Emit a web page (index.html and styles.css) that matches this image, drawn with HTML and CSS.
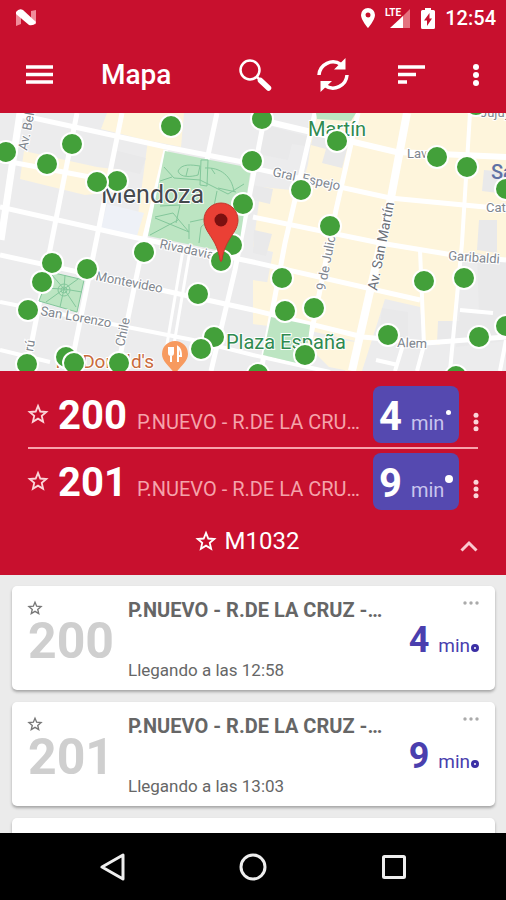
FILE: index.html
```html
<!DOCTYPE html>
<html lang="es">
<head>
    <meta charset="UTF-8">
    <meta name="viewport" content="width=device-width, initial-scale=1.0">
    <title>Mapa</title>
    <link rel="stylesheet" href="styles.css">
</head>
<body>
    <!-- shared icons -->
    <svg class="sprite" aria-hidden="true">
        <symbol id="star" viewBox="0 0 24 24">
            <path d="M12 3.2l2.5 6.1 6.6.5-5 4.3 1.5 6.4-5.6-3.4-5.6 3.4 1.5-6.4-5-4.3 6.6-.5z" fill="none" stroke="currentColor" stroke-width="2"/>
        </symbol>
        <symbol id="more" viewBox="0 0 8 24">
            <circle cx="4" cy="4" r="3"/>
            <circle cx="4" cy="12" r="3"/>
            <circle cx="4" cy="20" r="3"/>
        </symbol>
        <symbol id="dots" viewBox="0 0 16 4">
            <circle cx="2" cy="2" r="1.7"/>
            <circle cx="8" cy="2" r="1.7"/>
            <circle cx="14" cy="2" r="1.7"/>
        </symbol>
    </svg>

    <div class="status-bar">
        <svg class="status-n" width="22" height="18" viewBox="0 0 22 18">
            <path d="M1 3l5-2v14l-5 2zM16 2l5-1v14l-5 1z" fill="#f08c9b"/>
            <path d="M1 3Q4-1 8 1l13 12q-2 4-7 3L1 5z" fill="#fff"/>
        </svg>
        <div class="status-icons">
            <svg width="14" height="20" viewBox="0 0 14 20">
                <path fill-rule="evenodd" d="M7 0a7 7 0 0 0-7 7c0 5 7 13 7 13s7-8 7-13a7 7 0 0 0-7-7zm0 4.500a2.500 2.500 0 1 1 0 5 2.500 2.500 0 0 1 0-5z" fill="#fff"/>
            </svg>
            <svg width="26" height="22" viewBox="0 0 26 22">
                <path d="M25 2v19h-9v-10z" fill="#e4727f"/>
                <path d="M5 21L18 9v12z" fill="#fff"/>
                <text x="0" y="9" class="lte">LTE</text>
            </svg>
            <svg width="14" height="21" viewBox="0 0 14 21">
                <path fill-rule="evenodd" d="M4 0h6v2h2.500q1.500 0 1.500 1.500v16q0 1.500-1.500 1.500h-11Q0 21 0 19.500v-16Q0 2 1.500 2H4zM8.500 5L3 12.500h3V18l5-7.500H8.500z" fill="#fff"/>
            </svg>
            <span class="clock">12:54</span>
        </div>
    </div>

    <header class="app-bar">
        <button class="icon-btn" aria-label="Menú">
            <svg width="27" height="20" viewBox="0 0 27 20"><path d="M0 2h27M0 9.500h27M0 17h27" stroke="#fff" stroke-width="3.500"/></svg>
        </button>
        <h1 class="title">Mapa</h1>
        <div class="actions">
            <button class="icon-btn action" aria-label="Buscar">
                <svg width="34" height="34" viewBox="0 0 34 34">
                    <circle cx="12" cy="12" r="9.500" fill="none" stroke="#fff" stroke-width="2.500"/>
                    <path d="M18.500 18.500l4 4" stroke="#fff" stroke-width="2.500"/>
                    <path d="M22.500 22.500l8 7.500" stroke="#fff" stroke-width="5.500" stroke-linecap="round"/>
                </svg>
            </button>
            <button class="icon-btn action" aria-label="Actualizar">
                <svg width="34" height="34" viewBox="0 0 34 34">
                    <path d="M3 17A14 14 0 0 1 25 6.500M31 17A14 14 0 0 1 9 27.500" fill="none" stroke="#fff" stroke-width="3.500"/>
                    <path d="M29.500 0v11.500H18zM4.500 34V23H16z" fill="#fff"/>
                </svg>
            </button>
            <button class="icon-btn action" aria-label="Ordenar">
                <svg width="27" height="20" viewBox="0 0 27 20"><path d="M0 2h27M0 9.500h18M0 17h9" stroke="#fff" stroke-width="3.500"/></svg>
            </button>
            <button class="icon-btn" aria-label="Más opciones">
                <svg class="icon-more" width="8" height="24"><use href="#more"/></svg>
            </button>
        </div>
    </header>

    <main class="content">
        <svg class="map" viewBox="0 113 506 258" preserveAspectRatio="xMidYMid slice" role="img" aria-label="Mapa de paradas">
            <rect y="113" width="506" height="258" fill="#ececed"/>

            <!-- commercial blocks -->
            <g fill="#fef5dc">
                <path d="M107 113h77l-3 34-40-8-40-10z"/>
                <path d="M24 151l73 16 24 3-6 22-30 3-65-16z"/>
                <path d="M148 140l17 5-22 95-8-2z"/>
                <path d="M315 113h191v145l-46-3-4 75-17 15-15-3-4-35-35-8-23 72H345l10-30-40-9-55-12 13-68-20-5 8-60 40 4 7-27z"/>
                <path d="M253 280l26 4-10 42-16-2zM296 334l60 8-7 29-20-4z"/>
            </g>
            <g fill="#e9e9ea">
                <path d="M315 128l36 6-9 34-20-5 4-14-15-4z"/>
                <path d="M265 125l45 12-5 9-13-2-4 16-30-6z"/>
                <path d="M253 185l20 4-3 15-17-4zM254 230l18 4-6 22-13-3z"/>
                <path d="M484 170l22 2v22l-24-3zM479 220h18v33l-20-3z"/>
                <path d="M382 308l26 4v28l-29-5zM438 321h22l-4 22h-19z"/>
                <path d="M477 253l29 8v80l-50 6 4-35 19 2z"/>
                <path d="M114 150l32 8-6 16-31-7z"/>
            </g>
            <path d="M107 204l37 9-8 26-36-8z" fill="#eef1f7"/>

            <!-- streets -->
            <g fill="none" stroke="#fff" stroke-width="5">
                <path d="M20 113L1 240" stroke-width="7"/>
                <path d="M77 113L26 371M122 113L70 371M166 150L143 245 117 371M217 113L207 160" />
                <path d="M263 125L235 270 211 371M315 113L285 243 261 371M358 113L336 210 310 340"/>
                <path d="M183 250L166 350M190 250L173 350" stroke-width="3"/>
                <path d="M407 113L390 203 352 371" stroke-width="8"/>
                <path d="M470 113L462 243 450 371M420 250L424 345 417 371M403 345l-8 26M506 340l-6 31" stroke-width="4"/>
                <path d="M20 115L166 147 253 164"/>
                <path d="M253 168L390 198 506 209M0 160L95 178"/>
                <path d="M0 207L133 237 253 262 420 300"/>
                <path d="M265 121L396 152 506 157" stroke-width="6"/>
                <path d="M253 217L380 243 453 255 506 260M0 255L253 310 363 337 426 343 506 337"/>
                <path d="M0 302L193 340 253 355 330 372M0 350L50 362M460 310L493 313M376 360l22 5" stroke-width="4"/>
            </g>

            <!-- parks -->
            <g fill="#bce5c2">
                <path d="M165 151l86 17-12 78-18 5-73-15z"/>
                <path d="M50 272l34 8-7 32-38-11z"/>
                <path d="M271 317l39 8-5 40-42-10z"/>
                <path d="M316 113h40l-5 8-34-2z"/>
            </g>
            <g fill="none" stroke="#83c79b" stroke-width="1">
                <path d="M164 167l10 11 26 2 28 14 16-10M178 171c4-8 14-6 22-5l-2 9c-7 2-18 3-20-4zM188 168l-2 8M201 160h7l-1 26-7-1zM205 168c15-1 27 8 29 24M217 191l-4 20M160 181l12-4M160 206l20-1-4 18M155 217l18-4 16 19-34-14M150 235l28-15M189 224v15M190 222l14-3M199 243l2-16 10-9M211 168l4 6M218 188l18 4"/>
                <path d="M64 289l-12-14M64 289l-18 13M64 289l14-10M64 289l12 18M64 289l-4 18M64 289l-22-1M64 289l1-14M64 289l18 3"/>
                <circle cx="64" cy="290" r="6"/>
                <circle cx="64" cy="290" r="3"/>
                <path d="M50 272l34 8-7 32-38-11z"/>
            </g>

            <!-- street and place names -->
            <g class="street">
                <text transform="translate(27 151) rotate(-79)">Av. Belgrano</text>
                <text transform="translate(272 176) rotate(12)">Gral. Espejo</text>
                <text transform="translate(159 248) rotate(12)">Rivadavia</text>
                <text transform="translate(95 280) rotate(11)">Montevideo</text>
                <text transform="translate(40 315) rotate(10)">San Lorenzo</text>
                <text transform="translate(124 347) rotate(-78)">Chile</text>
                <text transform="translate(33 352) rotate(-80)">rú</text>
                <text transform="translate(325 291) rotate(-79)">9 de Julio</text>
                <text x="407" y="158">Lavalle</text>
                <text x="486" y="212">Catamarca</text>
                <text transform="translate(448 260) rotate(4)">Garibaldi</text>
                <text transform="translate(397 347) rotate(2)">Alem</text>
                <text x="480" y="117">Jujuy</text>
            </g>
            <text class="street avenue" transform="translate(377 291) rotate(-79)">Av. San Martín</text>
            <text class="city" x="101" y="203">Mendoza</text>
            <text class="park" x="308" y="136">Martín</text>
            <text class="park" x="226" y="349">Plaza España</text>
            <text class="place" x="154" y="368" text-anchor="end">McDonald's</text>
            <text class="district" x="491" y="179">San</text>

            <path d="M175 341a13 13 0 0 0-13 13c0 8 8 12 12 19h2c4-7 12-11 12-19a13 13 0 0 0-13-13z" fill="#f79a5f"/>
            <path d="M169 347v6q0 2 2 2v7M173 347v6q0 2-2 2M171 347v8M178 362v-15q3 2 3 9h-3" fill="none" stroke="#fff" stroke-width="2"/>

            <!-- bus stops -->
            <g class="stops">
                <circle cx="6" cy="152" r="11"/>
                <circle cx="47" cy="164" r="11"/>
                <circle cx="72" cy="144" r="11"/>
                <circle cx="171" cy="126" r="11"/>
                <circle cx="262" cy="119" r="11"/>
                <circle cx="117" cy="181" r="11"/>
                <circle cx="97" cy="182" r="11"/>
                <circle cx="252" cy="161" r="11"/>
                <circle cx="243" cy="204" r="11"/>
                <circle cx="232" cy="245" r="11"/>
                <circle cx="221" cy="261" r="11"/>
                <circle cx="144" cy="252" r="11"/>
                <circle cx="301" cy="190" r="11"/>
                <circle cx="337" cy="141" r="11"/>
                <circle cx="330" cy="226" r="11"/>
                <circle cx="437" cy="157" r="11"/>
                <circle cx="467" cy="167" r="11"/>
                <circle cx="506" cy="189" r="11"/>
                <circle cx="476" cy="105" r="11"/>
                <circle cx="52" cy="263" r="11"/>
                <circle cx="87" cy="269" r="11"/>
                <circle cx="42" cy="282" r="11"/>
                <circle cx="28" cy="310" r="11"/>
                <circle cx="198" cy="294" r="11"/>
                <circle cx="282" cy="278" r="11"/>
                <circle cx="285" cy="311" r="11"/>
                <circle cx="314" cy="308" r="11"/>
                <circle cx="214" cy="337" r="11"/>
                <circle cx="201" cy="349" r="11"/>
                <circle cx="388" cy="335" r="11"/>
                <circle cx="424" cy="281" r="11"/>
                <circle cx="464" cy="278" r="11"/>
                <circle cx="479" cy="337" r="11"/>
                <circle cx="506" cy="326" r="11"/>
                <circle cx="305" cy="355" r="11"/>
                <circle cx="27" cy="364" r="11"/>
                <circle cx="66" cy="357" r="11"/>
                <circle cx="74" cy="363" r="11"/>
                <circle cx="119" cy="363" r="11"/>
                <circle cx="258" cy="374" r="11"/>
                <circle cx="456" cy="376" r="11"/>
            </g>

            <!-- selected stop -->
            <path d="M221 203a17 17 0 0 0-17 17c0 13 13 18 16 40q1 3 2 0c3-22 16-27 16-40a17 17 0 0 0-17-17z" fill="#ea4035" stroke="#c5362e" stroke-width="1"/>
            <circle cx="221" cy="220" r="6.500" fill="#7b1010"/>
        </svg>

        <section class="stop-panel">
            <div class="line-row">
                <button class="star-btn" aria-label="Favorito 200"><svg width="22" height="22"><use href="#star"/></svg></button>
                <strong class="line-number">200</strong>
                <span class="line-dest">P.NUEVO - R.DE LA CRU…</span>
                <span class="eta-badge"><b>4</b> min<i class="live"></i></span>
                <button class="more-btn" aria-label="Opciones 200"><svg width="8" height="20"><use href="#more"/></svg></button>
            </div>
            <div class="line-row">
                <button class="star-btn" aria-label="Favorito 201"><svg width="22" height="22"><use href="#star"/></svg></button>
                <strong class="line-number">201</strong>
                <span class="line-dest">P.NUEVO - R.DE LA CRU…</span>
                <span class="eta-badge"><b>9</b> min<i class="live live-big"></i></span>
                <button class="more-btn" aria-label="Opciones 201"><svg width="8" height="20"><use href="#more"/></svg></button>
            </div>
            <div class="stop-footer">
                <button class="stop-name"><svg width="22" height="22"><use href="#star"/></svg>M1032</button>
                <button class="collapse-btn" aria-label="Contraer">
                    <svg width="18" height="12" viewBox="0 0 18 12"><path d="M1.500 10.500L9 3l7.500 7.500" fill="none" stroke="#fbc9cf" stroke-width="3"/></svg>
                </button>
            </div>
        </section>

        <section class="arrivals">
            <article class="card">
                <div class="card-line">
                    <button class="star-btn" aria-label="Favorito 200"><svg width="16" height="16"><use href="#star"/></svg></button>
                    <strong>200</strong>
                </div>
                <div class="card-info">
                    <h2>P.NUEVO - R.DE LA CRUZ -…</h2>
                    <p>Llegando a las 12:58</p>
                </div>
                <div class="card-eta">
                    <button class="dots-btn" aria-label="Opciones 200"><svg width="16" height="4"><use href="#dots"/></svg></button>
                    <span class="eta"><b>4</b> min<i class="ring"></i></span>
                </div>
            </article>
            <article class="card">
                <div class="card-line">
                    <button class="star-btn" aria-label="Favorito 201"><svg width="16" height="16"><use href="#star"/></svg></button>
                    <strong>201</strong>
                </div>
                <div class="card-info">
                    <h2>P.NUEVO - R.DE LA CRUZ -…</h2>
                    <p>Llegando a las 13:03</p>
                </div>
                <div class="card-eta">
                    <button class="dots-btn" aria-label="Opciones 201"><svg width="16" height="4"><use href="#dots"/></svg></button>
                    <span class="eta"><b>9</b> min<i class="ring"></i></span>
                </div>
            </article>
            <article class="card"></article>
        </section>
    </main>

    <nav class="nav-bar">
        <button class="icon-btn" aria-label="Atrás">
            <svg width="28" height="28" viewBox="0 0 28 28"><path d="M25 2v24L4 14z" fill="none" stroke="#eee" stroke-width="3" stroke-linejoin="round"/></svg>
        </button>
        <button class="icon-btn" aria-label="Inicio">
            <svg width="28" height="28" viewBox="0 0 28 28"><circle cx="14" cy="14" r="12" fill="none" stroke="#eee" stroke-width="3"/></svg>
        </button>
        <button class="icon-btn" aria-label="Recientes">
            <svg width="28" height="28" viewBox="0 0 28 28"><rect x="3.500" y="3.500" width="21" height="21" rx="1" fill="none" stroke="#eee" stroke-width="3"/></svg>
        </button>
    </nav>
</body>
</html>
```
FILE: styles.css
```css
* {
    margin: 0;
    padding: 0;
    box-sizing: border-box;
}

body {
    font-family: Roboto, "Noto Sans", sans-serif;
    background: #ebebeb;
    height: 100vh;
    display: flex;
    flex-direction: column;
    overflow: hidden;
}

button {
    background: none;
    border: none;
    color: inherit;
    font: inherit;
    cursor: pointer;
}

svg {
    display: block;
    flex: none;
}

.sprite {
    position: absolute;
    width: 0;
    height: 0;
}

.status-bar {
    background: #c8102e;
    height: 36px;
    padding: 0 10px 0 15px;
    display: flex;
    align-items: center;
    justify-content: space-between;
    flex: none;
}

.status-icons {
    display: flex;
    align-items: center;
    gap: 10px;
}

.lte {
    font-size: 10px;
    font-weight: 700;
    fill: #fff;
}

.clock {
    color: #fff;
    font-size: 20px;
    font-weight: 500;
    line-height: 24px;
}

.app-bar {
    background: #c8102e;
    color: #fff;
    height: 77px;
    padding: 0 18px;
    display: flex;
    align-items: center;
    flex: none;
}

.icon-btn {
    display: flex;
    align-items: center;
    justify-content: center;
    padding: 8px;
}

.title {
    font-size: 28px;
    font-weight: 500;
    line-height: 32px;
    margin-left: 40px;
}

.actions {
    display: flex;
    align-items: center;
    gap: 28px;
    margin-left: auto;
}

.action {
    width: 50px;
}

.icon-more {
    fill: #fff;
}

.content {
    flex: 1;
    min-height: 0;
    display: flex;
    flex-direction: column;
    overflow: hidden;
}

.map {
    width: 100%;
    height: 258px;
}

.street {
    font-size: 13px;
    fill: #80868e;
    paint-order: stroke;
    stroke: #fff;
    stroke-width: 2px;
}

.avenue {
    font-size: 14px;
    fill: #6b7078;
}

.city {
    font-size: 25px;
    fill: #45494e;
    paint-order: stroke;
    stroke: #fff;
    stroke-width: 2px;
}

.park {
    font-size: 20px;
    fill: #2f8a50;
    paint-order: stroke;
    stroke: #fff;
    stroke-width: 2px;
}

.place {
    font-size: 19px;
    fill: #c96a3c;
    paint-order: stroke;
    stroke: #fff;
    stroke-width: 2px;
}

.district {
    font-size: 20px;
    font-weight: 500;
    fill: #5f72a5;
}

.stops {
    fill: #43a03a;
    stroke: #fff;
    stroke-width: 2px;
}

.stop-panel {
    background: #c8102e;
    color: #fff;
    padding: 10px 28px 0;
    flex: none;
}

.line-row {
    display: flex;
    align-items: center;
    height: 66px;
}

.line-row + .line-row {
    border-top: 2px solid #f8a3ab;
}

.line-row .star-btn {
    margin-left: -1px;
    color: #fbd5d9;
}

.line-number {
    font-size: 40px;
    line-height: 56px;
    width: 79px;
    margin-left: 9px;
    padding-top: 4px;
}

.line-dest {
    flex: 1;
    min-width: 0;
    color: #f5a3ab;
    font-size: 20px;
    line-height: 24px;
    padding-top: 16px;
    white-space: nowrap;
    overflow: hidden;
}

.eta-badge {
    background: #5549b0;
    color: #c9c5ee;
    width: 86px;
    height: 57px;
    padding-left: 6px;
    border-radius: 8px;
    font-size: 20px;
    line-height: 61px;
    white-space: nowrap;
    position: relative;
    flex: none;
}

.eta-badge b {
    color: #fff;
    font-size: 40px;
    margin-right: 4px;
}

/* real-time marker over the badge */
.live {
    position: absolute;
    top: 24px;
    right: 8px;
    width: 5px;
    height: 5px;
    border-radius: 50%;
    background: #fff;
}

.live-big {
    top: 22px;
    right: 6px;
    width: 8px;
    height: 8px;
}

.more-btn {
    fill: #fbd5d9;
    margin: 16px -2px 0 13px;
}

.stop-footer {
    display: grid;
    grid-template-columns: 1fr auto 1fr;
    align-items: center;
    height: 62px;
}

.stop-name {
    grid-column: 2;
    display: flex;
    align-items: center;
    gap: 8px;
    font-size: 24px;
    line-height: 28px;
    padding: 0 12px 6px 0;
}

.collapse-btn {
    justify-self: end;
    padding-top: 4px;
}

.arrivals {
    padding: 11px 11px 0 12px;
    display: flex;
    flex-direction: column;
    gap: 12px;
}

.card {
    background: #fff;
    border-radius: 5px;
    box-shadow: 0 2px 3px rgba(0,0,0,0.3);
    height: 104px;
    padding: 14px 16px 10px;
    display: flex;
    flex: none;
}

.card-line {
    width: 100px;
    color: #777;
    flex: none;
}

.card-line .star-btn {
    display: block;
    margin-left: -1px;
}

.card-line strong {
    display: block;
    color: #cfcfcf;
    font-size: 50px;
    line-height: 50px;
}

.card-info {
    flex: 1;
    min-width: 0;
    color: #666;
    display: flex;
    flex-direction: column;
    justify-content: space-between;
    white-space: nowrap;
}

.card-info h2 {
    font-size: 20px;
    font-weight: 700;
    line-height: 20px;
}

.card-info p {
    font-size: 17px;
    line-height: 20px;
}

.card-eta {
    display: flex;
    flex-direction: column;
    align-items: flex-end;
}

.dots-btn {
    fill: #aaa;
    padding: 1px 0;
}

.eta {
    color: #4a3fae;
    font-size: 19px;
    line-height: 40px;
    padding-top: 14px;
    white-space: nowrap;
}

.eta b {
    font-size: 36px;
    margin-right: 4px;
}

.ring {
    display: inline-block;
    width: 8px;
    height: 8px;
    margin-left: 1px;
    border: 3px solid #3b2fa5;
    border-radius: 50%;
}

.nav-bar {
    background: #000;
    height: 67px;
    padding: 0 90px;
    display: flex;
    align-items: center;
    justify-content: space-between;
    flex: none;
}
```
